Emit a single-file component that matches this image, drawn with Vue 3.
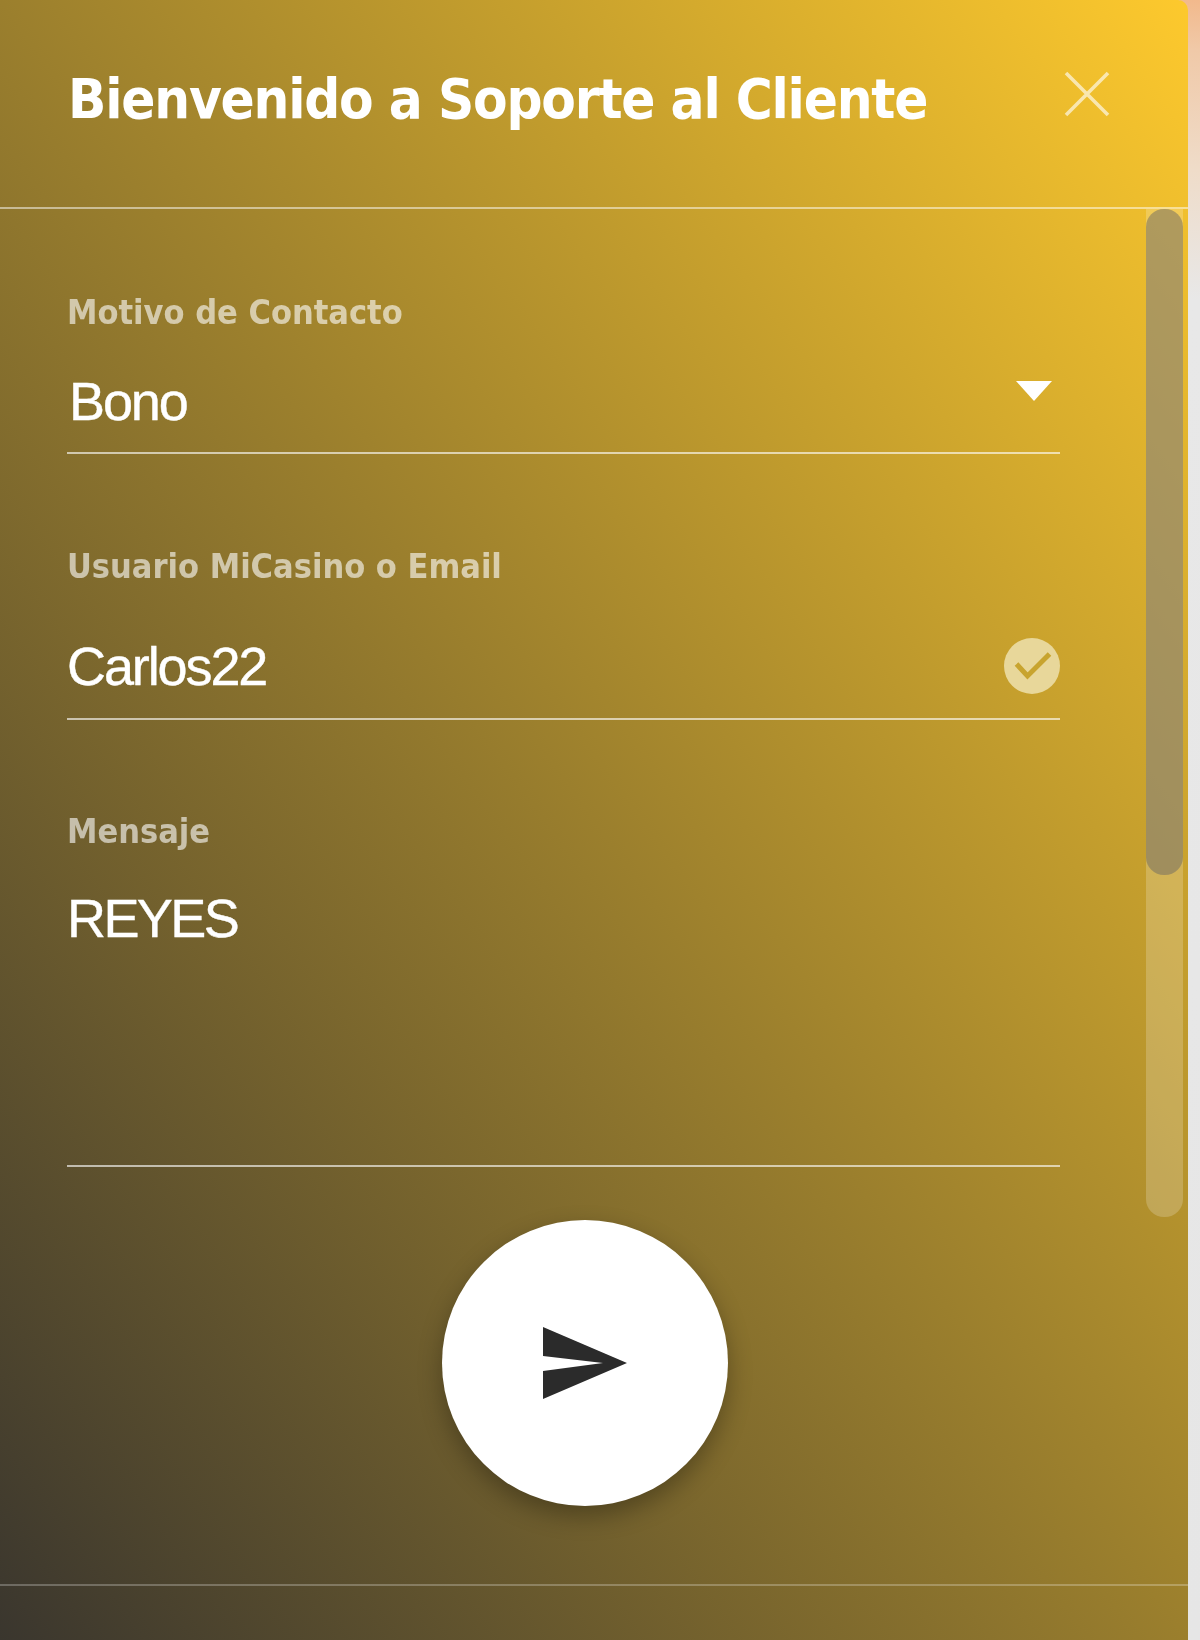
<template>
  <div class="page">
    <div class="panel">
      <header class="panel-head">
        <h1 class="title">Bienvenido a Soporte al Cliente</h1>
        <button class="close-btn" aria-label="Cerrar">
          <svg width="46" height="46" viewBox="0 0 46 46" fill="none">
            <path d="M2 2l42 42M44 2L2 44" stroke="#fff" stroke-opacity="0.62" stroke-width="3.6"/>
          </svg>
        </button>
      </header>

      <div class="panel-body">
        <form class="form">
          <div class="field field-select">
            <label class="label">Motivo de Contacto</label>
            <div class="control">
              <span class="value value-bono">Bono</span>
              <svg class="caret" width="36" height="20" viewBox="0 0 36 20">
                <path d="M0 0h36L18 20z" fill="#fff"/>
              </svg>
            </div>
          </div>

          <div class="field field-user">
            <label class="label">Usuario MiCasino o Email</label>
            <div class="control">
              <span class="value">Carlos22</span>
              <svg class="check" width="56" height="56" viewBox="0 0 56 56">
                <circle cx="28" cy="28" r="28" fill="#e8d79a"/>
                <path d="M12.500 26l11 12L45.500 16" fill="none" stroke="#c8a42f" stroke-width="5"/>
              </svg>
            </div>
          </div>

          <div class="field field-msg">
            <label class="label">Mensaje</label>
            <div class="control control-msg">
              <span class="value value-msg">REYES</span>
            </div>
          </div>

          <div class="send-row">
            <button type="button" class="send-btn" aria-label="Enviar">
              <svg width="84" height="72" viewBox="0 0 84 72">
                <path d="M0 0L84 36 0 72V44L60 36 0 29z" fill="#2b2b2b"/>
              </svg>
            </button>
          </div>
        </form>

        <div class="scrollbar">
          <div class="scroll-thumb"></div>
        </div>
      </div>

      <div class="panel-foot"></div>
    </div>
  </div>
</template>

<script setup>
</script>

<style>
html, body {
  margin: 0;
  background: #e6e6e6;
}
</style>

<style scoped>
.page {
  width: 1200px;
  height: 1640px;
  display: flex;
  overflow: hidden;
  background: linear-gradient(180deg, #f2b98c 0, #f0c9a8 50px, #efdcc9 170px, #e8e8e8 300px, #e6e6e6 100%);
  font-family: "Liberation Sans", Arial, sans-serif;
}

.panel {
  width: 1188px;
  height: 1640px;
  display: flex;
  flex-direction: column;
  border-top-right-radius: 10px;
  background: linear-gradient(to bottom left, #fdc92d 0%, #9b7f2d 50%, #3a362e 100%);
}

.panel-head {
  height: 207px;
  flex-shrink: 0;
  padding: 0 78px 0 68px;
  display: flex;
  align-items: center;
  justify-content: space-between;
  border-bottom: 2px solid rgba(255, 255, 255, 0.5);
}

.title {
  margin: 0 0 10px;
  font-family: "DejaVu Sans", sans-serif;
  font-stretch: condensed;
  font-size: 56px;
  font-weight: 700;
  letter-spacing: -1.2px;
  color: #fff;
  filter: blur(0.6px);
}

.close-btn {
  padding: 0;
  margin-bottom: 20px;
  border: none;
  background: none;
  display: flex;
  filter: blur(0.6px);
}

.panel-body {
  flex: 1;
  display: flex;
  min-height: 0;
}

.form {
  width: 1060px;
  box-sizing: border-box;
  padding: 83px 0 0 67px;
  display: flex;
  flex-direction: column;
}

.field {
  display: flex;
  flex-direction: column;
}

.label {
  font-family: "DejaVu Sans", sans-serif;
  font-stretch: condensed;
  font-size: 34px;
  line-height: 40px;
  font-weight: 700;
  color: rgba(255, 255, 255, 0.6);
  filter: blur(0.6px);
}

.control {
  width: 993px;
  height: 122px;
  box-sizing: border-box;
  padding-top: 18px;
  display: flex;
  align-items: center;
  justify-content: space-between;
  border-bottom: 2px solid rgba(255, 255, 255, 0.62);
}

.value {
  font-size: 54px;
  letter-spacing: -2.1px;
  color: #fff;
  -webkit-text-stroke: 0.4px #fff;
  filter: blur(0.6px);
}

.value-bono {
  padding-left: 2px;
}

.value-msg {
  letter-spacing: -2.6px;
}

.caret {
  margin: 0 8px 20px 0;
  filter: blur(0.5px);
}

.field-user {
  margin-top: 92px;
}

.field-user .control {
  height: 134px;
  padding-top: 28px;
}

.field-msg {
  margin-top: 91px;
}

.control-msg {
  height: 316px;
  align-items: flex-start;
  padding-top: 36px;
}

.send-row {
  width: 993px;
  padding-left: 42px;
  box-sizing: border-box;
  display: flex;
  justify-content: center;
  margin-top: 53px;
}

.send-btn {
  width: 286px;
  height: 286px;
  border: none;
  border-radius: 50%;
  padding: 0;
  background: #fff;
  box-shadow: 0 10px 24px rgba(0, 0, 0, 0.3);
  display: flex;
  align-items: center;
  justify-content: center;
}

.scrollbar {
  width: 37px;
  height: 1008px;
  margin: 0 5px 0 auto;
  border-radius: 0 0 18px 18px;
  background: rgba(255, 255, 255, 0.2);
}

.scroll-thumb {
  height: 666px;
  border-radius: 18px;
  background: rgba(110, 105, 100, 0.5);
}

.panel-foot {
  height: 54px;
  flex-shrink: 0;
  border-top: 2px solid rgba(255, 255, 255, 0.25);
}
</style>
